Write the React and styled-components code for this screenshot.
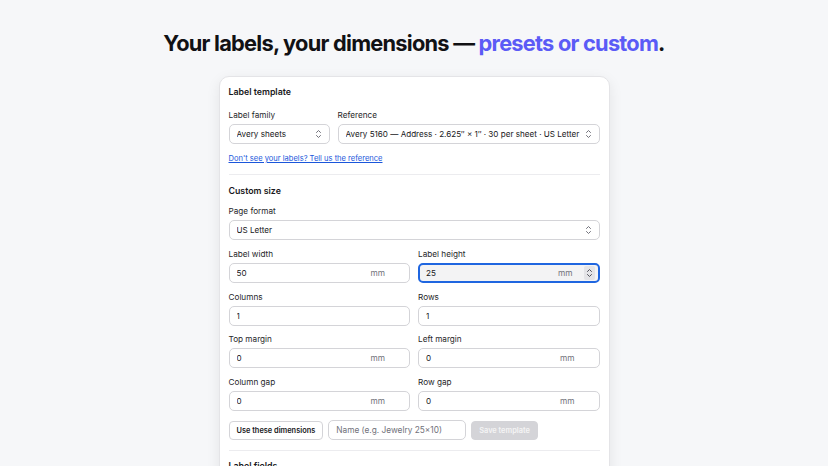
import styled, { createGlobalStyle } from 'styled-components';

const Global = createGlobalStyle`
	html, body {
		margin: 0;
		padding: 0;
		background: #f6f7f9;
		font-family: Inter, 'Liberation Sans', sans-serif;
		color: #18181b;
	}
	#root {
		height: 466px;
		overflow: hidden;
	}
`;

const Page = styled.div`
	display: flex;
	flex-direction: column;
	align-items: center;
	padding-top: 28px;
`;

const Headline = styled.h1`
	margin: 0 0 18px;
	font-size: 21.8px;
	font-weight: 700;
	letter-spacing: -0.035em;
	line-height: 30px;
	color: #111114;
	span {
		color: #5b5bf6;
	}
`;

const Card = styled.div`
	width: 371px;
	background: #fff;
	border: 1px solid #e4e4e7;
	border-radius: 10px;
	box-shadow: 0 4px 14px rgba(0, 0, 0, 0.08);
	padding: 8px 9px 20px;
`;

const SectionTitle = styled.h2`
	margin: 0 0 ${(p) => p.spacing || '8px'};
	font-size: 8.8px;
	font-weight: 600;
	line-height: 14px;
`;

const Grid = styled.div`
	display: grid;
	grid-template-columns: ${(p) => p.cols || 'minmax(0, 1fr) minmax(0, 1fr)'};
	column-gap: 8px;
	row-gap: ${(p) => p.rowGap || '8.7px'};
`;

const Field = styled.label`
	display: flex;
	flex-direction: column;
	gap: 3px;
	min-width: 0;
`;

const FieldLabel = styled.span`
	font-size: 8.2px;
	line-height: 11px;
	color: #27272a;
`;

const Box = styled.div`
	display: flex;
	align-items: center;
	gap: 2px;
	height: 20px;
	box-sizing: border-box;
	border: ${(p) => (p.focused ? '2px solid #1f66e0' : '1px solid #d4d4d8')};
	border-radius: 5px;
	background: ${(p) => (p.focused ? '#f3f3f4' : '#fff')};
	padding: 0 ${(p) => (p.focused ? '3px' : '7px')} 0 ${(p) => (p.focused ? '6px' : '7px')};
	font-size: 8.1px;
	color: #18181b;
	white-space: nowrap;
	overflow: hidden;
`;

const Value = styled.span`
	flex: 1;
	min-width: 0;
	overflow: hidden;
	color: #18181b;
`;

const Unit = styled.span`
	color: #71717a;
	font-size: 8.3px;
	margin-right: ${(p) => (p.withSpin ? '9px' : '17px')};
`;

const Spinner = styled.span`
	display: flex;
	align-items: center;
	justify-content: center;
	width: 11px;
	height: 14px;
	border-radius: 2px;
	background: #e4e4e7;
`;

const Chevrons = ({ color = '#71717a' }) => (
	<svg width="7" height="10" viewBox="0 0 7 10" fill="none" stroke={color} strokeWidth="1" strokeLinecap="round" strokeLinejoin="round">
		<path d="M1.5 3.5 L3.5 1.5 L5.5 3.5" />
		<path d="M1.5 6.5 L3.5 8.5 L5.5 6.5" />
	</svg>
);

const Link = styled.a`
	display: block;
	margin-top: 9px;
	font-size: 7.55px;
	color: #1a56db;
	text-decoration: underline;
	line-height: 12px;
`;

const Divider = styled.hr`
	border: 0;
	border-top: 1px solid #ececef;
	margin: ${(p) => p.margin || '9px 0 9px'};
`;

const Actions = styled.div`
	display: flex;
	align-items: center;
	gap: 5px;
	margin-top: 9px;
`;

const Button = styled.button`
	height: 19px;
	padding: 0 7px;
	border: 1px solid #d4d4d8;
	border-radius: 4px;
	background: ${(p) => (p.disabled ? '#d4d4d8' : '#fff')};
	color: ${(p) => (p.disabled ? '#f4f4f5' : '#18181b')};
	font-family: inherit;
	font-size: 7.4px;
	font-weight: 600;
	cursor: pointer;
`;

const NameInput = styled.div`
	width: 138px;
	height: 20px;
	box-sizing: border-box;
	border: 1px solid #d4d4d8;
	border-radius: 5px;
	display: flex;
	align-items: center;
	padding: 0 7px;
	font-size: 8.3px;
	color: #71717a;
`;

const Select = ({ value }) => (
	<Box>
		<Value>{value}</Value>
		<Chevrons />
	</Box>
);

const NumberInput = ({ value, unit, focused }) => (
	<Box focused={focused}>
		<Value>{value}</Value>
		{unit && <Unit withSpin={focused}>{unit}</Unit>}
		{focused && (
			<Spinner>
				<Chevrons color="#52525b" />
			</Spinner>
		)}
	</Box>
);

const fields = [
	['Label width', '50', 'mm'],
	['Label height', '25', 'mm', true],
	['Columns', '1'],
	['Rows', '1'],
	['Top margin', '0', 'mm'],
	['Left margin', '0', 'mm'],
	['Column gap', '0', 'mm'],
	['Row gap', '0', 'mm'],
];

const App = () => (
	<>
		<Global />
		<Page>
			<Headline>
				Your labels, your dimensions — <span>presets or custom</span>.
			</Headline>
			<Card>
				<SectionTitle spacing="11px">Label template</SectionTitle>
				<Grid cols="101px minmax(0, 1fr)">
					<Field>
						<FieldLabel>Label family</FieldLabel>
						<Select value="Avery sheets" />
					</Field>
					<Field>
						<FieldLabel>Reference</FieldLabel>
						<Select value="Avery 5160 — Address · 2.625″ × 1″ · 30 per sheet · US Letter" />
					</Field>
				</Grid>
				<Link href="#">Don't see your labels? Tell us the reference</Link>
				<Divider />
				<SectionTitle>Custom size</SectionTitle>
				<Grid cols="minmax(0, 1fr)" rowGap="9px">
					<Field>
						<FieldLabel>Page format</FieldLabel>
						<Select value="US Letter" />
					</Field>
					<Grid>
						{fields.map(([label, value, unit, focused]) => (
							<Field key={label}>
								<FieldLabel>{label}</FieldLabel>
								<NumberInput value={value} unit={unit} focused={focused} />
							</Field>
						))}
					</Grid>
				</Grid>
				<Actions>
					<Button>Use these dimensions</Button>
					<NameInput>Name (e.g. Jewelry 25×10)</NameInput>
					<Button disabled>Save template</Button>
				</Actions>
				<Divider margin="10px 0 8px" />
				<SectionTitle>Label fields</SectionTitle>
			</Card>
		</Page>
	</>
);

export default App;
